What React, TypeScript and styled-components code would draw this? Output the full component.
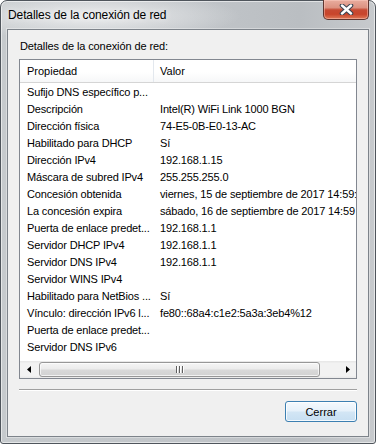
import styled, { createGlobalStyle } from 'styled-components';

interface Row {
  name: string;
  value: string;
}

const rows: Row[] = [
  { name: 'Sufijo DNS específico p...', value: '' },
  { name: 'Descripción', value: 'Intel(R) WiFi Link 1000 BGN' },
  { name: 'Dirección física', value: '74-E5-0B-E0-13-AC' },
  { name: 'Habilitado para DHCP', value: 'Sí' },
  { name: 'Dirección IPv4', value: '192.168.1.15' },
  { name: 'Máscara de subred IPv4', value: '255.255.255.0' },
  { name: 'Concesión obtenida', value: 'viernes, 15 de septiembre de 2017 14:59:' },
  { name: 'La concesión expira', value: 'sábado, 16 de septiembre de 2017 14:59' },
  { name: 'Puerta de enlace predet...', value: '192.168.1.1' },
  { name: 'Servidor DHCP IPv4', value: '192.168.1.1' },
  { name: 'Servidor DNS IPv4', value: '192.168.1.1' },
  { name: 'Servidor WINS IPv4', value: '' },
  { name: 'Habilitado para NetBios ...', value: 'Sí' },
  { name: 'Vínculo: dirección IPv6 l...', value: 'fe80::68a4:c1e2:5a3a:3eb4%12' },
  { name: 'Puerta de enlace predet...', value: '' },
  { name: 'Servidor DNS IPv6', value: '' },
];

const App = () => {
  return (
    <>
      <GlobalStyle />
      <Window>
        <TitleBar>
          <Title>Detalles de la conexión de red</Title>
          <CloseButton aria-label="Cerrar">
            <svg width="15" height="11" viewBox="0 0 15 11">
              <path d="M3 1.5 L12 9.5 M12 1.5 L3 9.5" stroke="#3b4350" strokeWidth="4.6" strokeLinecap="round" fill="none" />
              <path d="M3 1.5 L12 9.5 M12 1.5 L3 9.5" stroke="#ffffff" strokeWidth="2.4" strokeLinecap="round" fill="none" />
            </svg>
          </CloseButton>
        </TitleBar>
        <Client>
          <Label>Detalles de la conexión de red:</Label>
          <ListView>
            <Header>
              <HeaderCell>Propiedad</HeaderCell>
              <HeaderCell $last>Valor</HeaderCell>
            </Header>
            <Body>
              {rows.map((r, i) => (
                <ListRow key={i}>
                  <NameCell>{r.name}</NameCell>
                  <ValueCell>{r.value}</ValueCell>
                </ListRow>
              ))}
            </Body>
            <HScroll>
              <ArrowBox>
                <svg width="4" height="7" viewBox="0 0 4 7">
                  <path d="M4 0 L0 3.5 L4 7 Z" fill="#000" />
                </svg>
              </ArrowBox>
              <Track>
                <Thumb>
                  <Grip />
                  <Grip />
                  <Grip />
                </Thumb>
              </Track>
              <ArrowBox>
                <svg width="4" height="7" viewBox="0 0 4 7">
                  <path d="M0 0 L4 3.5 L0 7 Z" fill="#000" />
                </svg>
              </ArrowBox>
            </HScroll>
          </ListView>
          <Separator />
          <ButtonRow>
            <DialogButton>Cerrar</DialogButton>
          </ButtonRow>
        </Client>
      </Window>
    </>
  );
};

const GlobalStyle = createGlobalStyle`
  html, body {
    margin: 0;
    padding: 0;
    width: 376px;
    height: 444px;
    overflow: hidden;
    background: #ffffff;
  }
  * { box-sizing: border-box; }
`;

const Window = styled.div`
  width: 376px;
  height: 444px;
  display: flex;
  flex-direction: column;
  border: 1px solid #4f555c;
  border-radius: 7px 7px 3px 3px;
  background:
    radial-gradient(ellipse 150px 24px at 90px 15px, rgba(238, 239, 240, 0.95), rgba(238, 239, 240, 0) 100%),
    linear-gradient(to right, #c6cacd 0%, #c1c5c9 50%, #babec2 80%, #c7cacd 100%);
  box-shadow: inset 0 0 0 1px rgba(255, 255, 255, 0.55);
  font-family: 'Liberation Sans', Arial, sans-serif;
  color: #000;
`;

const TitleBar = styled.div`
  height: 28px;
  flex: none;
  display: flex;
  justify-content: space-between;
  align-items: flex-start;
  padding: 0 6px 0 7px;
`;

const Title = styled.div`
  font-size: 12px;
  line-height: 28px;
  letter-spacing: -0.1px;
  color: #000;
  text-shadow: 0 0 6px rgba(255, 255, 255, 0.9);
`;

const CloseButton = styled.div`
  width: 46px;
  height: 20px;
  margin-top: -1px;
  display: flex;
  align-items: center;
  justify-content: center;
  border: 1px solid #5e3530;
  border-top: none;
  border-radius: 0 0 5px 5px;
  background: linear-gradient(
    to bottom,
    #e9ad9f 0%,
    #dc9281 40%,
    #c64a33 52%,
    #c8452b 75%,
    #df7a58 100%
  );
  box-shadow: inset 0 0 0 1px rgba(255, 210, 200, 0.45);
`;

const Client = styled.div`
  flex: 1;
  margin: 0 6px 6px 6px;
  display: flex;
  flex-direction: column;
  padding: 9px 11px 0 11px;
  background: #f0f0f0;
  border: 1px solid #7d838a;
  box-shadow: 0 0 0 1px rgba(255, 255, 255, 0.35);
`;

const Label = styled.div`
  font-size: 11px;
  line-height: 14px;
  letter-spacing: -0.1px;
  margin: 0 0 6px 1px;
`;

const ListView = styled.div`
  height: 320px;
  flex: none;
  display: flex;
  flex-direction: column;
  border: 1px solid #828790;
  background: #ffffff;
  overflow: hidden;
`;

const Header = styled.div`
  height: 23px;
  flex: none;
  display: grid;
  grid-template-columns: 134px 1fr;
  background: linear-gradient(to bottom, #ffffff 0%, #ffffff 55%, #f6f7f8 100%);
  border-bottom: 1px solid #d5d5d5;
`;

const HeaderCell = styled.div<{ $last?: boolean }>`
  font-size: 11px;
  line-height: 22px;
  padding-left: ${(p) => (p.$last ? '6px' : '7px')};
  border-right: ${(p) => (p.$last ? 'none' : '1px solid #e3e8ee')};
`;

const Body = styled.div`
  flex: 1;
  padding-top: 1px;
  overflow: hidden;
`;

const ListRow = styled.div`
  display: grid;
  grid-template-columns: 134px 200px;
  height: 17px;
  font-size: 11px;
  line-height: 17px;
  letter-spacing: -0.15px;
  white-space: nowrap;
`;

const NameCell = styled.div`
  padding-left: 7px;
  overflow: hidden;
`;

const ValueCell = styled.div`
  padding-left: 6px;
`;

const HScroll = styled.div`
  height: 17px;
  flex: none;
  display: flex;
  background: linear-gradient(to bottom, #e6e6e6 0%, #f2f2f2 15%, #f2f2f2 85%, #e9e9e9 100%);
`;

const ArrowBox = styled.div`
  width: 17px;
  flex: none;
  display: flex;
  align-items: center;
  justify-content: center;
`;

const Track = styled.div`
  flex: 1;
  display: flex;
  align-items: center;
  padding-left: 2px;
`;

const Thumb = styled.div`
  width: 281px;
  height: 15px;
  display: flex;
  align-items: center;
  justify-content: center;
  gap: 2px;
  border: 1px solid #979797;
  border-radius: 3px;
  background: linear-gradient(to bottom, #f5f5f5 0%, #ebebeb 48%, #d9d9d9 52%, #d2d2d2 100%);
  box-shadow: inset 0 0 0 1px rgba(255, 255, 255, 0.7);
`;

const Grip = styled.div`
  width: 1px;
  height: 7px;
  background: #5f5f5f;
  box-shadow: 1px 0 0 #ffffff;
`;

const Separator = styled.div`
  height: 1px;
  flex: none;
  margin-top: 10px;
  background: #a0a0a0;
  box-shadow: 0 1px 0 #ffffff;
`;

const ButtonRow = styled.div`
  display: flex;
  justify-content: flex-end;
  margin-top: 11px;
`;

const DialogButton = styled.button`
  width: 72px;
  height: 21px;
  padding: 0;
  font-family: 'Liberation Sans', Arial, sans-serif;
  font-size: 11px;
  color: #000;
  border: 1px solid #3c7fb1;
  border-radius: 3px;
  background: linear-gradient(to bottom, #f4f9fd 0%, #e6f1fa 48%, #d3e6f5 52%, #c7dff2 100%);
  box-shadow: inset 0 0 0 1px rgba(255, 255, 255, 0.8);
  cursor: pointer;
`;

export default App;
